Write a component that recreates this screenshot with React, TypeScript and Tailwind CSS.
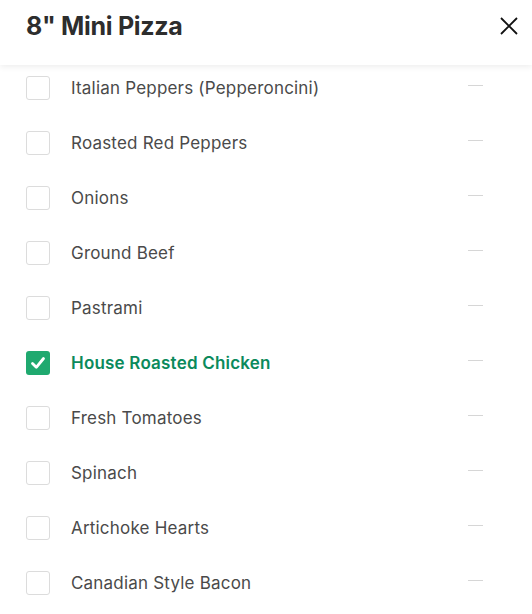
import { useState } from 'react';

const TOPPINGS = [
  'Italian Peppers (Pepperoncini)',
  'Roasted Red Peppers',
  'Onions',
  'Ground Beef',
  'Pastrami',
  'House Roasted Chicken',
  'Fresh Tomatoes',
  'Spinach',
  'Artichoke Hearts',
  'Canadian Style Bacon',
];

function CheckIcon() {
  return (
    <svg width="24" height="24" viewBox="0 0 24 24" fill="none">
      <path d="M6.5 12.5l3.8 3.8L17.5 7.5" stroke="white" strokeWidth="2.8" strokeLinecap="round" strokeLinejoin="round" />
    </svg>
  );
}

export default function App() {
  const [selected, setSelected] = useState<string[]>(['House Roasted Chicken']);

  const toggle = (name: string) =>
    setSelected((s) => (s.includes(name) ? s.filter((n) => n !== name) : [...s, name]));

  return (
    <div className="w-[532px] h-[614px] overflow-hidden bg-white" style={{ fontFamily: 'Inter, "Open Sans", sans-serif' }}>
      {/* header */}
      <div className="relative z-10 h-[65px] flex items-start justify-between pl-[26px] pr-[9px] pt-[9px] shadow-[0_2px_6px_rgba(0,0,0,0.07)]">
        <h1 className="text-[25px] leading-[34px] font-bold text-[#2d2d2d] tracking-[-0.3px]">8" Mini Pizza</h1>
        <button className="w-[28px] h-[28px] flex items-center justify-center mt-[3px]">
          <svg width="20" height="20" viewBox="0 0 20 20">
            <path d="M2 2l16 16M18 2L2 18" stroke="#111" strokeWidth="1.8" />
          </svg>
        </button>
      </div>

      {/* list */}
      <div className="flex flex-col">
        {TOPPINGS.map((name) => {
          const on = selected.includes(name);
          return (
            <div key={name} className="h-[55px] pt-[11px] pl-[26px] pr-[49px] flex items-start" onClick={() => toggle(name)}>
              <div className="flex items-center w-full h-[24px]">
                <div
                  className={`w-[24px] h-[24px] rounded-[3px] flex items-center justify-center shrink-0 ${
                    on ? 'bg-[#1fa96f]' : 'border border-[#dcdcdc] bg-white'
                  }`}
                >
                  {on && <CheckIcon />}
                </div>
                <span
                  className={`ml-[21px] text-[17px] leading-[24px] flex-1 tracking-[0.2px] ${
                    on ? 'font-semibold text-[#0b8a5c]' : 'text-[#4a4a4a]'
                  }`}
                >
                  {name}
                </span>
                <div className="w-[15px] h-px bg-[#d6d6d6] -mt-[6px]" />
              </div>
            </div>
          );
        })}
      </div>
    </div>
  );
}
